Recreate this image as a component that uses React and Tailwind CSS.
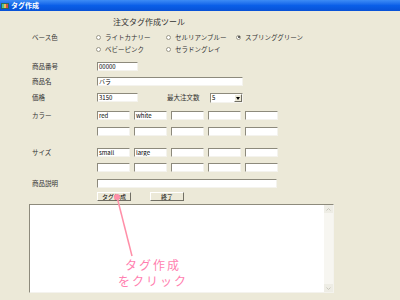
import React from 'react';

const FONT = { fontFamily: '"MS UI Gothic", "Noto Sans CJK JP", "Noto Sans", sans-serif' };

// sunken XP text box
const Field = ({ w = 'w-[33px]', value }) => (
  <div
    className={`${w} h-[9px] bg-white border border-t-[#8d8a7c] border-l-[#8d8a7c] border-b-[#f4f3ee] border-r-[#f4f3ee] text-[6px] leading-[7px] pl-[1px] text-black overflow-hidden whitespace-nowrap`}
  >
    {value}
  </div>
);

const Btn = ({ children }) => (
  <div className="w-[34px] h-[9px] bg-[#ECE9D8] border border-t-white border-l-white border-b-[#716f64] border-r-[#716f64] text-[6px] leading-[7px] text-center text-black">
    {children}
  </div>
);

const Radio = ({ label, checked }) => (
  <div className="flex items-center gap-[4px] w-[70px]">
    <div className="w-[5px] h-[5px] rounded-full bg-white border border-[#9b9888] flex items-center justify-center">
      {checked && <div className="w-[2px] h-[2px] rounded-full bg-[#333]" />}
    </div>
    <span className="text-[6.5px] leading-[8px] text-[#333] whitespace-nowrap">{label}</span>
  </div>
);

const Label = ({ children }) => (
  <div className="w-[65px] text-[6.5px] leading-[9px] text-[#333] whitespace-nowrap">{children}</div>
);

const GridRow = ({ values = [] }) => (
  <div className="flex gap-[4px]">
    {[0, 1, 2, 3, 4].map((i) => (
      <Field key={i} value={values[i]} />
    ))}
  </div>
);

export default function App() {
  return (
    <div className="w-[400px] h-[300px] bg-[#ECE9D8] relative overflow-hidden" style={FONT}>
      {/* title bar */}
      <div className="h-[11px] bg-gradient-to-b from-[#3d8cf5] via-[#0a5fe8] to-[#0851d6] flex items-center pl-[1px] gap-[2px]">
        <svg width="8" height="6" viewBox="0 0 8 6">
          <rect x="0" y="0" width="8" height="6" fill="#2e6b5a" />
          <rect x="1" y="1" width="2" height="4" fill="#4fc39a" />
          <rect x="3" y="1" width="2" height="4" fill="#e8c050" />
          <rect x="5" y="1" width="2" height="4" fill="#d05050" />
        </svg>
        <span className="text-white font-bold text-[7px] leading-[9px]">タグ作成</span>
      </div>

      <div className="pl-[32px]">
        <div className="mt-[7px] ml-[81px] h-[8px] text-[8px] leading-[8px] text-[#333] whitespace-nowrap">
          注文タグ作成ツール
        </div>

        <div className="mt-[7px] flex">
          <Label>ベース色</Label>
          <div className="flex flex-col gap-[4px] ml-[-1px]">
            <div className="flex h-[8px]">
              <Radio label="ライトカナリー" />
              <Radio label="セルリアンブルー" />
              <Radio label="スプリンググリーン" checked />
            </div>
            <div className="flex h-[8px]">
              <Radio label="ベビーピンク" />
              <Radio label="セラドングレイ" />
            </div>
          </div>
        </div>

        <div className="mt-[9px] flex">
          <Label>商品番号</Label>
          <Field w="w-[41px]" value="00000" />
        </div>

        <div className="mt-[6px] flex">
          <Label>商品名</Label>
          <Field w="w-[146px]" value="バラ" />
        </div>

        <div className="mt-[7px] flex items-start">
          <Label>価格</Label>
          <Field w="w-[41px]" value="3150" />
          <div className="ml-[29px] w-[43px] text-[6.5px] leading-[9px] text-[#333] whitespace-nowrap">最大注文数</div>
          <div className="w-[33px] h-[10px] bg-white border border-t-[#8d8a7c] border-l-[#8d8a7c] border-b-[#f4f3ee] border-r-[#f4f3ee] flex">
            <span className="flex-1 text-[6px] leading-[8px] pl-[1px]">5</span>
            <div className="w-[8px] h-[8px] bg-[#ECE9D8] border border-t-white border-l-white border-b-[#716f64] border-r-[#716f64] flex items-center justify-center">
              <svg width="4" height="3" viewBox="0 0 4 3"><path d="M0 0h4L2 3z" fill="#000" /></svg>
            </div>
          </div>
        </div>

        <div className="mt-[8px] flex">
          <Label>カラー</Label>
          <GridRow values={['red', 'white']} />
        </div>
        <div className="mt-[7px] flex">
          <Label />
          <GridRow />
        </div>

        <div className="mt-[12px] flex">
          <Label>サイズ</Label>
          <GridRow values={['small', 'large']} />
        </div>
        <div className="mt-[6px] flex">
          <Label />
          <GridRow />
        </div>

        <div className="mt-[7px] flex">
          <Label>商品説明</Label>
          <Field w="w-[180px]" />
        </div>

        <div className="mt-[4px] flex">
          <Label />
          <Btn>タグ作成</Btn>
          <div className="ml-[19px]">
            <Btn>終了</Btn>
          </div>
        </div>
      </div>

      {/* output area */}
      <div className="mt-[3px] ml-[29px] w-[305px] h-[89px] bg-white border border-t-[#8d8a7c] border-l-[#8d8a7c] border-b-[#f4f3ee] border-r-[#f4f3ee] flex justify-end">
        <div className="w-[9px] h-full bg-[#f7f6f1] flex flex-col justify-between">
          <div className="h-[8px] bg-[#eeede5] flex items-center justify-center">
            <svg width="5" height="3" viewBox="0 0 5 3"><path d="M0.5 2.5L2.5 0.5L4.5 2.5" stroke="#c9c7bc" fill="none" /></svg>
          </div>
          <div className="h-[8px] bg-[#eeede5] flex items-center justify-center">
            <svg width="5" height="3" viewBox="0 0 5 3"><path d="M0.5 0.5L2.5 2.5L4.5 0.5" stroke="#c9c7bc" fill="none" /></svg>
          </div>
        </div>
      </div>

      {/* annotation */}
      <svg className="absolute left-0 top-0 pointer-events-none" width="400" height="300" viewBox="0 0 400 300">
        <line x1="117" y1="197" x2="132" y2="256" stroke="#ff8fa8" strokeWidth="1.5" />
        <circle cx="117" cy="197" r="3" fill="#ff8fa8" />
      </svg>
      <div className="absolute left-[112px] top-[257px] w-[82px] text-center text-[12px] leading-[16px] tracking-[2px] text-[#ff7fb0]">
        <div>タグ作成</div>
        <div>をクリック</div>
      </div>
    </div>
  );
}
